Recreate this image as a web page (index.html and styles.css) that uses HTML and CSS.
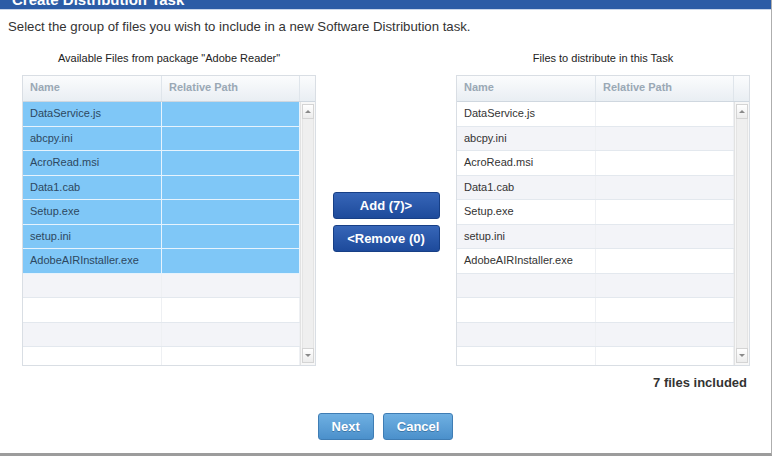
FILE: index.html
```html
<!DOCTYPE html>
<html lang="en">
<head>
    <meta charset="UTF-8">
    <title>Create Distribution Task</title>
    <link rel="stylesheet" href="styles.css">
</head>
<body>
    <div class="dialog">
        <div class="titlebar">
            <h1>Create Distribution Task</h1>
        </div>
        <p class="intro">Select the group of files you wish to include in a new Software Distribution task.</p>

        <div class="picker">
            <div class="pane">
                <div class="pane-label">Available Files from package "Adobe Reader"</div>
                <div class="grid">
                    <div class="grid-head">
                        <span>Name</span>
                        <span>Relative Path</span>
                        <span></span>
                    </div>
                    <div class="grid-body">
                        <div class="rows">
                            <div class="row selected"><span>DataService.js</span><span></span></div>
                            <div class="row selected"><span>abcpy.ini</span><span></span></div>
                            <div class="row selected"><span>AcroRead.msi</span><span></span></div>
                            <div class="row selected"><span>Data1.cab</span><span></span></div>
                            <div class="row selected"><span>Setup.exe</span><span></span></div>
                            <div class="row selected"><span>setup.ini</span><span></span></div>
                            <div class="row selected"><span>AdobeAIRInstaller.exe</span><span></span></div>
                            <div class="row"><span></span><span></span></div>
                            <div class="row"><span></span><span></span></div>
                            <div class="row"><span></span><span></span></div>
                            <div class="row"><span></span><span></span></div>
                        </div>
                        <div class="scroll">
                            <span class="arrow up"></span>
                            <span class="track"></span>
                            <span class="arrow down"></span>
                        </div>
                    </div>
                </div>
            </div>

            <div class="actions">
                <button class="btn-dark">Add (7)&gt;</button>
                <button class="btn-dark">&lt;Remove (0)</button>
            </div>

            <div class="pane">
                <div class="pane-label">Files to distribute in this Task</div>
                <div class="grid">
                    <div class="grid-head">
                        <span>Name</span>
                        <span>Relative Path</span>
                        <span></span>
                    </div>
                    <div class="grid-body">
                        <div class="rows">
                            <div class="row"><span>DataService.js</span><span></span></div>
                            <div class="row"><span>abcpy.ini</span><span></span></div>
                            <div class="row"><span>AcroRead.msi</span><span></span></div>
                            <div class="row"><span>Data1.cab</span><span></span></div>
                            <div class="row"><span>Setup.exe</span><span></span></div>
                            <div class="row"><span>setup.ini</span><span></span></div>
                            <div class="row"><span>AdobeAIRInstaller.exe</span><span></span></div>
                            <div class="row"><span></span><span></span></div>
                            <div class="row"><span></span><span></span></div>
                            <div class="row"><span></span><span></span></div>
                            <div class="row"><span></span><span></span></div>
                        </div>
                        <div class="scroll">
                            <span class="arrow up"></span>
                            <span class="track"></span>
                            <span class="arrow down"></span>
                        </div>
                    </div>
                </div>
            </div>
        </div>

        <div class="count">7 files included</div>

        <div class="footer">
            <button class="btn-light">Next</button>
            <button class="btn-light">Cancel</button>
        </div>
    </div>
</body>
</html>
```

FILE: styles.css
```css
body {
    font-family: "Liberation Sans", Arial, sans-serif;
    margin: 0;
    background: #fff;
    color: #333;
}
.dialog {
    width: 772px;
    height: 456px;
    box-sizing: border-box;
    border-right: 1px solid #aeaeae;
    border-bottom: 3px solid #9c9c9c;
    background: #fff;
}
.titlebar {
    height: 9px;
    overflow: hidden;
    background: #2c5ca6;
    border-bottom: 1px solid #c9d6ea;
}
.titlebar h1 {
    margin: -8px 0 0 12px;
    font-size: 15px;
    line-height: 15px;
    color: #fff;
}
.intro {
    margin: 0;
    padding: 9px 0 0 8px;
    font-size: 13.2px;
    line-height: 16px;
    color: #333;
}
.picker {
    display: flex;
    padding: 0 21px 0 22px;
}
.pane {
    width: 294px;
}
.pane-label {
    text-align: center;
    font-size: 11px;
    line-height: 13px;
    color: #222;
    padding: 17px 0 10px;
}
.grid {
    border: 1px solid #d9dee4;
}
.grid-head,
.row {
    display: grid;
    grid-template-columns: 139px 138px 15px;
}
.grid-head {
    height: 25px;
    background: linear-gradient(#fbfcfd, #e9eef3);
    border-bottom: 1px solid #cfd7df;
}
.grid-head span {
    font-size: 11px;
    font-weight: bold;
    color: #9aa8b5;
    line-height: 23px;
    padding-left: 7px;
    border-right: 1px solid #dfe5eb;
}
.grid-head span:last-child {
    border-right: none;
}
.grid-body {
    display: flex;
    height: 263px;
    overflow: hidden;
}
.rows {
    width: 277px;
}
.row {
    grid-template-columns: 139px 138px;
    height: 24.5px;
    box-sizing: border-box;
    border-bottom: 1px solid #e3e8ee;
}
.row:nth-child(odd) {
    background: #fff;
}
.row:nth-child(even) {
    background: #f3f4f8;
}
.row span {
    font-size: 11px;
    line-height: 23px;
    padding-left: 7px;
    border-right: 1px solid #eef0f3;
    color: #333;
}
.row.selected {
    background: #7fc7f7;
    border-bottom-color: #e6f3fd;
}
.row.selected span {
    color: #2d4760;
    border-right-color: #e6f3fd;
}
.scroll {
    width: 15px;
    display: flex;
    flex-direction: column;
    align-items: center;
    background: #f7f7f7;
    border-left: 1px solid #e2e2e2;
    padding: 2px 0;
    box-sizing: border-box;
}
.track {
    flex: 1;
    width: 12px;
    background: #efefef;
    border-left: 1px solid #e4e4e4;
    border-right: 1px solid #e4e4e4;
    box-sizing: border-box;
}
.arrow {
    width: 12px;
    height: 15px;
    box-sizing: border-box;
    border: 1px solid #d4d4d4;
    background: linear-gradient(#fff, #ececec);
    display: flex;
    align-items: center;
    justify-content: center;
}
.arrow::after {
    content: "";
    border-left: 3px solid transparent;
    border-right: 3px solid transparent;
}
.arrow.up::after {
    border-bottom: 3px solid #8a8a8a;
}
.arrow.down::after {
    border-top: 3px solid #8a8a8a;
}
.actions {
    width: 140px;
    display: flex;
    flex-direction: column;
    align-items: center;
    gap: 6px;
    padding-top: 157px;
    box-sizing: border-box;
}
.btn-dark {
    width: 107px;
    height: 27px;
    border: 1px solid #173f86;
    border-radius: 3px;
    background: linear-gradient(#3766b8, #1d4a9b);
    color: #fff;
    font-family: inherit;
    font-size: 13px;
    font-weight: bold;
    padding: 0;
}
.count {
    text-align: right;
    padding: 9px 24px 0 0;
    font-size: 13px;
    font-weight: bold;
    line-height: 16px;
    color: #333;
}
.footer {
    display: flex;
    justify-content: center;
    gap: 9px;
    padding-top: 22px;
}
.btn-light {
    height: 27px;
    padding: 0 13px;
    border: 1px solid #3f7db4;
    border-radius: 3px;
    background: linear-gradient(#6fb0e2, #4b90cb);
    color: #fff;
    font-family: inherit;
    font-size: 13px;
    font-weight: bold;
    text-shadow: 0 1px 0 #3b76a8;
}
```
